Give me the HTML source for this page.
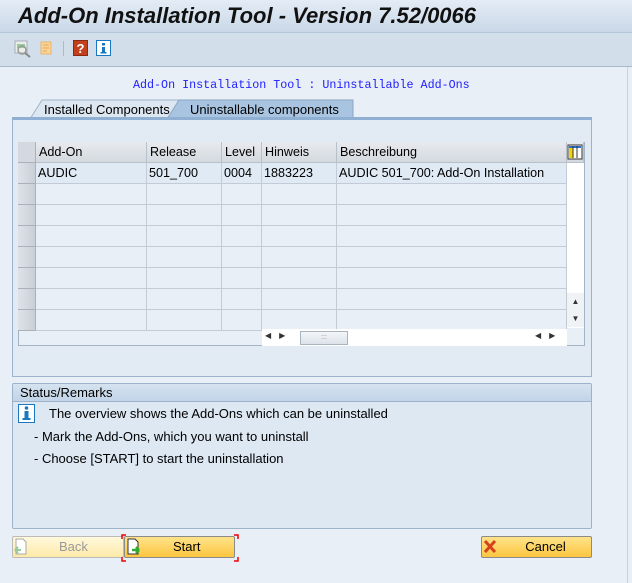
<!DOCTYPE html>
<html><head><meta charset="utf-8"><style>
*{margin:0;padding:0;box-sizing:border-box}
body{width:632px;height:583px;overflow:hidden;background:#e9eff7;font-family:"Liberation Sans",sans-serif;font-size:12.6px;color:#000;position:relative}
.a{position:absolute}
.title{left:0;top:0;width:632px;height:33px;background:linear-gradient(#e4ecf5,#c9d8e8);border-bottom:1px solid #b5c6d8}
.title span{position:absolute;left:18px;top:3px;font-size:22px;font-weight:bold;font-style:italic;color:#111}
.tb{left:0;top:33px;width:632px;height:34px;background:#d2dee9;border-bottom:1px solid #a9b9c9}
.cell{position:absolute;border-right:1px solid #c3ccd6;border-bottom:1px solid #c3ccd6;height:21px;line-height:20px;padding-left:2px;white-space:nowrap;overflow:hidden}
.hdr{background:linear-gradient(#e8ebef,#d4d9df);border-right:1px solid #b8c0c9;border-bottom:1px solid #b8c0c9;height:21px;line-height:20px;padding-left:3px;position:absolute}
.rs{position:absolute;left:18px;width:18px;height:21px;background:linear-gradient(90deg,#dfe3e8,#c9cfd6);border-bottom:1px solid #a9b1ba;border-right:1px solid #a9b1ba}
.btn{position:absolute;height:22px;border:1px solid #8b8b8b;border-radius:2px;background:linear-gradient(#ffe38a,#fcc640);text-align:center;line-height:20px;font-size:13px}
</style></head><body>
<div class="a title"><span>Add-On Installation Tool - Version 7.52/0066</span></div>
<div class="a tb">
 <svg class="a" style="left:14px;top:7px" width="18" height="18"><rect x="1" y="1" width="12" height="12" fill="#e8eee8" stroke="#aab"/><rect x="3" y="4" width="8" height="4" fill="#9c9"/><circle cx="8" cy="10" r="4" fill="none" stroke="#999" stroke-width="1.5"/><line x1="11" y1="13" x2="16" y2="17" stroke="#888" stroke-width="2"/></svg>
 <svg class="a" style="left:38px;top:7px" width="16" height="17"><path d="M3 2h10v12H3z" fill="#f9d59a" stroke="#e9b46a"/><path d="M5 5h6M5 8h6M5 11h4" stroke="#e9a85a"/></svg>
 <div class="a" style="left:63px;top:8px;width:1px;height:15px;background:#a9bccf"></div>
 <svg class="a" style="left:73px;top:7px" width="15" height="17"><rect x="0.5" y="0.5" width="14" height="15" fill="#c4401c" stroke="#8a2a10"/><text x="7.5" y="13" font-family="Liberation Sans" font-weight="bold" font-size="13" fill="#fff" text-anchor="middle">?</text></svg>
 <svg class="a" style="left:96px;top:7px" width="15" height="16"><rect x="0.5" y="0.5" width="14" height="15" fill="#fff" stroke="#1a78c2"/><rect x="6" y="3" width="3" height="2.5" fill="#1a78c2"/><rect x="6" y="7" width="3" height="6" fill="#1a78c2"/><rect x="4.5" y="12" width="6" height="1.5" fill="#1a78c2"/></svg>
</div>
<div class="a" style="left:627px;top:67px;width:1px;height:516px;background:#c6d3e0"></div>
<div class="a" style="left:133px;top:78px;font-family:'Liberation Mono',monospace;font-size:11.7px;color:#2020ff">Add-On Installation Tool : Uninstallable Add-Ons</div>
<svg class="a" style="left:26px;top:99px" width="335" height="21">
 <path d="M4 20 L16 1 H152 V20" fill="#dde7f1" stroke="#9fb5cb"/>
 <path d="M141 20 L153 1 H327 V20" fill="#a9c4e0" stroke="#8aa6c4"/>
</svg>
<div class="a" style="left:44px;top:102px;font-size:13px">Installed Components</div>
<div class="a" style="left:190px;top:102px;font-size:13px">Uninstallable components</div>
<div class="a" style="left:12px;top:117px;width:580px;height:260px;border:1px solid #9db3ca;border-top:3px solid #8fb0d2;background:#e2ebf4"></div>
<div class="a" style="left:18px;top:142px;width:567px;height:204px;border:1px solid #a3b4c6;background:#e8eff7"></div>
<div class="a" style="left:36px;top:163px;width:531px;height:165px;background:#e8eff7"></div>
<div class="rs" style="top:142px;background:#d4d9df"></div>
<div class="hdr" style="left:36px;top:142px;width:111px">Add-On</div>
<div class="hdr" style="left:147px;top:142px;width:75px">Release</div>
<div class="hdr" style="left:222px;top:142px;width:40px">Level</div>
<div class="hdr" style="left:262px;top:142px;width:75px">Hinweis</div>
<div class="hdr" style="left:337px;top:142px;width:230px">Beschreibung</div>
<div class="hdr" style="left:567px;top:142px;width:17px;padding:0"><svg width="16" height="18" style="margin:1px 0 0 0"><rect x="1" y="2" width="14" height="14" fill="#fff" stroke="#333"/><rect x="2" y="5" width="4" height="10" fill="#f2d400"/><rect x="6" y="3" width="4" height="2" fill="#2a6fc9"/><rect x="2" y="3" width="4" height="2" fill="#2a6fc9"/><rect x="10" y="3" width="4" height="2" fill="#2a6fc9"/><line x1="6" y1="3" x2="6" y2="15" stroke="#333"/><line x1="10" y1="3" x2="10" y2="15" stroke="#333"/></svg></div>
<div class="a" style="left:567px;top:163px;width:17px;height:165px;background:#fff"></div>
<div class="a" style="left:567px;top:293px;width:17px;height:34px;background:#f0f3f6;font-size:8px;color:#333;text-align:center;line-height:17px">▲<br>▼</div>
<div id="rows"></div>
<script>
var cols=[[36,111],[147,75],[222,40],[262,75],[337,230]];
var d=[["AUDIC","501_700","0004","1883223","AUDIC 501_700: Add-On Installation"]];
var h="";
for(var r=0;r<8;r++){var t=163+r*21;h+='<div class="rs" style="top:'+t+'px"></div>';
for(var c=0;c<5;c++){h+='<div class="cell" style="left:'+cols[c][0]+'px;top:'+t+'px;width:'+cols[c][1]+'px;'+(r==0?'background:#dfeaf5;':'')+'">'+(d[r]?d[r][c]:'')+'</div>';}}
document.getElementById('rows').innerHTML=h;
</script>
<div class="a" style="left:262px;top:329px;width:305px;height:17px;background:#fff"></div>
<div class="a" style="left:265px;top:331px;font-size:8px;color:#333;letter-spacing:8px">◀▶</div>
<div class="a" style="left:300px;top:331px;width:48px;height:14px;border:1px solid #a8b4c0;background:linear-gradient(#f3f5f8,#dde3ea);font-size:7px;text-align:center;color:#888;line-height:12px">:::</div>
<div class="a" style="left:535px;top:331px;font-size:8px;color:#333;letter-spacing:8px">◀▶</div>
<div class="a" style="left:12px;top:383px;width:580px;height:146px;border:1px solid #9db3ca;background:#dde8f3;border-radius:2px"></div>
<div class="a" style="left:13px;top:384px;width:578px;height:18px;background:linear-gradient(#d6e3f0,#c1d4e7);border-bottom:1px solid #9db3ca;padding-left:7px;line-height:17px;font-size:13px">Status/Remarks</div>
<svg class="a" style="left:18px;top:404px" width="17" height="19"><rect x="0.5" y="0.5" width="16" height="18" fill="#fff" stroke="#1a78c2"/><circle cx="8.5" cy="4" r="1.8" fill="#1a78c2"/><rect x="6.5" y="7" width="4" height="8" fill="#1a78c2"/><rect x="4.5" y="14" width="8" height="2" fill="#1a78c2"/></svg>
<div class="a" style="left:49px;top:406px;font-size:13px">The overview shows the Add-Ons which can be uninstalled</div>
<div class="a" style="left:34px;top:429px;font-size:13px">- Mark the Add-Ons, which you want to uninstall</div>
<div class="a" style="left:34px;top:451px;font-size:13px">- Choose [START] to start the uninstallation</div>
<div class="btn" style="left:12px;top:536px;width:112px;background:linear-gradient(#fff8dc,#fdeaa8);border-color:#bbb;color:#999">&nbsp;&nbsp;&nbsp;Back</div>
<svg class="a" style="left:14px;top:538px" width="14" height="18"><path d="M2 1h7l3 3v12H2z" fill="#fff" stroke="#aaa"/><path d="M1 12h6M1 12l3-3M1 12l3 3" stroke="#9c9" stroke-width="2" fill="none"/></svg>
<div class="btn" style="left:124px;top:536px;width:111px">&nbsp;&nbsp;&nbsp;&nbsp;Start</div>
<svg class="a" style="left:126px;top:538px" width="16" height="18"><path d="M2 1h7l3 3v12H2z" fill="#fff" stroke="#333"/><path d="M6 12h7M13 12l-3-3M13 12l-3 3" stroke="#3a3" stroke-width="2.5" fill="none"/></svg>
<svg class="a" style="left:121px;top:534px" width="118" height="28" fill="none" stroke="#e00" stroke-width="1.5"><path d="M1 5V1h4M113 1h4v4M117 23v4h-4M5 27H1v-4"/></svg>
<div class="btn" style="left:481px;top:536px;width:111px">&nbsp;&nbsp;&nbsp;&nbsp;&nbsp;Cancel</div>
<svg class="a" style="left:484px;top:540px" width="12" height="13"><path d="M1 1L11 12M11 1L1 12" stroke="#d5431c" stroke-width="3"/></svg>
</body></html>
